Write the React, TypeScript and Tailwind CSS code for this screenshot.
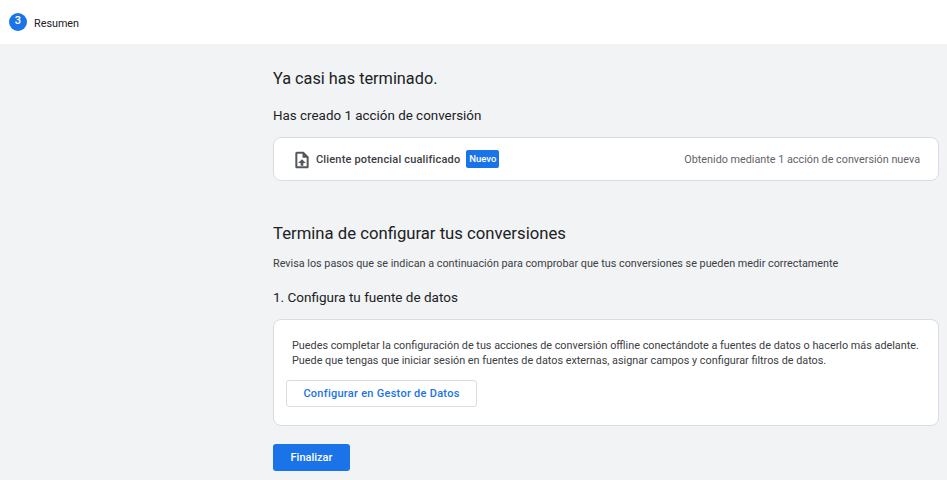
export default function App() {
  return (
    <div className="h-[480px] w-[947px] overflow-hidden bg-[#f1f3f4] font-['Roboto',sans-serif] text-[#202124]">
      <header className="flex h-[44px] items-center bg-white pl-[9px]">
        <span className="flex h-[18px] w-[18px] items-center justify-center rounded-full bg-[#1a73e8] pb-[1px] text-[11px] font-medium text-white">3</span>
        <span className="ml-[7px] pt-[4px] text-[10.8px] leading-none">Resumen</span>
      </header>
      <main className="ml-[273px] w-[666px]">
        <h1 className="mt-[24px] text-[16.3px] leading-[22px]">Ya casi has terminado.</h1>
        <h2 className="mt-[16px] text-[13.4px] leading-[20px]">Has creado 1 acción de conversión</h2>
        <section className="mt-[11px] flex h-[44px] items-center justify-between rounded-[8px] border border-[#dadce0] bg-white pl-[18px] pr-[18px]">
          <div className="flex items-center">
            <svg width="20" height="20" viewBox="0 0 24 24" fill="currentColor" className="mt-[1px] text-[#54585d]">
              <path fillRule="evenodd" d="M14 2H6c-1.1 0-2 .9-2 2v16c0 1.1.9 2 2 2h12c1.1 0 2-.9 2-2V8l-6-6zm3.6 17.6H6.4V4.4h6.2v5h5z" />
              <path d="M12 11 7.4 15.6h3V19h3.2v-3.4h3z" />
            </svg>
            <span className="ml-[4px] pt-[2px] text-[11px] font-medium tracking-[0.17px] text-[#3c4043]">Cliente potencial cualificado</span>
            <span className="ml-[6px] flex h-[18px] w-[33px] items-center justify-center rounded-[2px] bg-[#1a73e8] text-[9.5px] font-medium text-white">Nuevo</span>
          </div>
          <span className="pt-[2px] text-[10.8px] text-[#5f6368]">Obtenido mediante 1 acción de conversión nueva</span>
        </section>
        <h2 className="mt-[42px] text-[16.7px] leading-[22px]">Termina de configurar tus conversiones</h2>
        <p className="mt-[11px] text-[10.8px] leading-[16px] text-[#3c4043]">Revisa los pasos que se indican a continuación para comprobar que tus conversiones se pueden medir correctamente</p>
        <h3 className="mt-[15px] text-[13.5px] leading-[20px]">1. Configura tu fuente de datos</h3>
        <section className="mt-[12px] h-[107px] rounded-[8px] border border-[#dadce0] bg-white pl-[12px] pt-[18px]">
          <p className="pl-[6px] text-[10.83px] leading-[15px] text-[#3c4043]">
            Puedes completar la configuración de tus acciones de conversión offline conectándote a fuentes de datos o hacerlo más adelante.
            <br />
            Puede que tengas que iniciar sesión en fuentes de datos externas, asignar campos y configurar filtros de datos.
          </p>
          <button className="mt-[12px] h-[27px] w-[191px] rounded-[3px] border border-[#dadce0] bg-white pt-[1px] text-[11px] font-medium tracking-[0.27px] text-[#1a73e8]">Configurar en Gestor de Datos</button>
        </section>
        <button className="mt-[18px] h-[27px] w-[77px] rounded-[3px] bg-[#1a73e8] pt-[1px] text-[11px] font-medium text-white">Finalizar</button>
      </main>
    </div>
  );
}
